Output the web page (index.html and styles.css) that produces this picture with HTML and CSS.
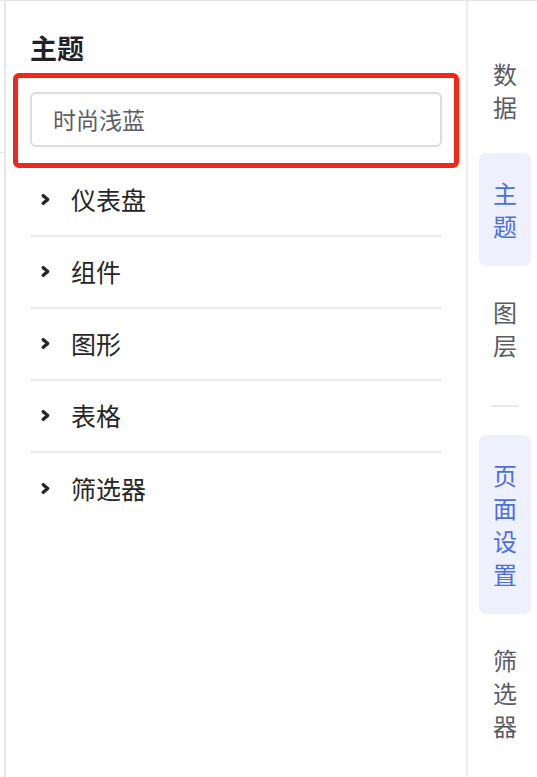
FILE: index.html
```html
<!DOCTYPE html>
<html lang="zh-CN">
<head>
<meta charset="utf-8">
<link rel="stylesheet" href="styles.css">
</head>
<body>
<div class="app">
  <div class="gutter"><div class="gutter-top"></div></div>
  <div class="panel">
    <h2 class="title">主题</h2>
    <div class="field">
      <div class="select">时尚浅蓝</div>
      <div class="highlight"></div>
    </div>
    <ul class="groups">
      <li class="group"><svg class="chev" viewBox="0 0 10 10"><polyline points="3,1.5 7,5 3,8.5"/></svg><span>仪表盘</span></li>
      <li class="group"><svg class="chev" viewBox="0 0 10 10"><polyline points="3,1.5 7,5 3,8.5"/></svg><span>组件</span></li>
      <li class="group"><svg class="chev" viewBox="0 0 10 10"><polyline points="3,1.5 7,5 3,8.5"/></svg><span>图形</span></li>
      <li class="group"><svg class="chev" viewBox="0 0 10 10"><polyline points="3,1.5 7,5 3,8.5"/></svg><span>表格</span></li>
      <li class="group"><svg class="chev" viewBox="0 0 10 10"><polyline points="3,1.5 7,5 3,8.5"/></svg><span>筛选器</span></li>
    </ul>
  </div>
  <nav class="side">
    <div class="tab">数<br>据</div>
    <div class="tab active">主<br>题</div>
    <div class="tab">图<br>层</div>
    <div class="sep"></div>
    <div class="tab active">页<br>面<br>设<br>置</div>
    <div class="tab">筛<br>选<br>器</div>
  </nav>
</div>
</body>
</html>
```

FILE: styles.css
```css
* { box-sizing: border-box; }
html, body { margin: 0; padding: 0; background: #fff; }
body {
  font-family: "Noto Sans CJK SC", "Noto Sans", sans-serif;
  width: 537px;
  height: 777px;
  overflow: hidden;
}
.app {
  display: flex;
  height: 777px;
  border-top: 1px solid #e6e6e9;
}
.gutter {
  width: 4px;
  flex: none;
}
.gutter-top {
  height: 152px;
  border-bottom: 1px solid #e4e4e8;
}
.panel {
  width: 464px;
  flex: none;
  border-left: 2px solid #e7e8ec;
  border-right: 2px solid #eceef1;
  padding: 33px 24px 0 24px;
}
.title {
  margin: 0;
  font-size: 27px;
  line-height: 28px;
  font-weight: 700;
  color: #1f2329;
}
.field {
  position: relative;
  margin-top: 30px;
}
.select {
  height: 55px;
  border: 2px solid #dcdde2;
  border-radius: 6px;
  padding-left: 21px;
  font-size: 23px;
  line-height: 51px;
  color: #5b5e64;
}
.highlight {
  position: absolute;
  top: -19px;
  left: -17px;
  right: -17px;
  bottom: -21px;
  border: 5px solid #f2261b;
  border-radius: 6px;
}
.groups {
  list-style: none;
  margin: 18px 0 0 0;
  padding: 0;
}
.group {
  display: flex;
  align-items: center;
  height: 72px;
  padding-left: 10px;
  padding-bottom: 2px;
  border-bottom: 2px solid #ebecef;
  font-size: 25px;
  color: #262626;
}
.group:last-child { border-bottom: none; }
.chev {
  width: 11px;
  height: 11px;
  margin-right: 20px;
  fill: none;
  stroke: #262626;
  stroke-width: 3;
  stroke-linecap: round;
  stroke-linejoin: round;
}
.side {
  flex: 1;
  display: flex;
  flex-direction: column;
  align-items: stretch;
  padding: 33px 6px 0 11px;
  gap: 6px;
}
.tab {
  text-align: center;
  font-size: 24px;
  line-height: 33px;
  padding: 23px 0 24px;
  color: #585c63;
  border-radius: 7px;
}
.tab.active {
  background: #eef1fd;
  color: #4d6fdc;
}
.sep {
  width: 28px;
  height: 2px;
  background: #e8e9ec;
  align-self: center;
  margin: 14px 0 22px;
}
```
